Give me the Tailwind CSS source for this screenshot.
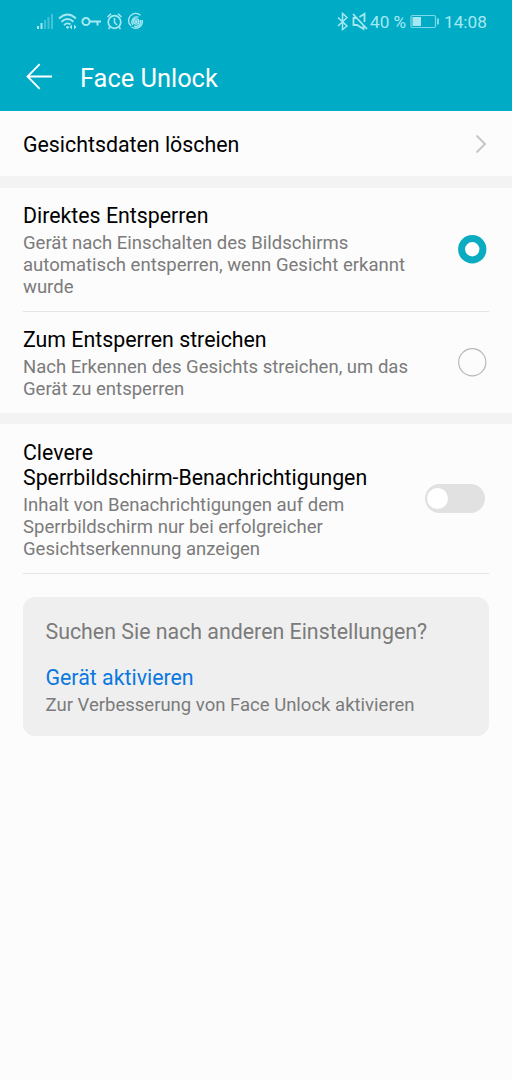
<!DOCTYPE html>
<html lang="de">
<head>
<meta charset="utf-8">
<meta name="viewport" content="width=device-width, initial-scale=1">
<title>Face Unlock</title>
<script src="https://cdn.jsdelivr.net/npm/@tailwindcss/browser@4"></script>
</head>
<body class="h-[1080px] w-[512px] overflow-hidden bg-[#fcfcfc] font-[Roboto,sans-serif] text-[18.53px] leading-[22px] text-[#7b7b7b]">
<header class="h-[111px] bg-[#00acc5] text-white">
  <div class="flex h-11 items-center justify-between pl-9 pr-[25px] text-[#a6e8f2]">
    <svg class="h-11 w-[112px]" viewBox="36 0 112 44" fill="none" stroke="currentColor" stroke-width="1.5">
      <g stroke="none" fill="currentColor"><rect x="37" y="26" width="2" height="3"/><rect x="40.500" y="23" width="2" height="6"/><g opacity=".4"><rect x="44" y="20" width="2" height="9"/><rect x="47.500" y="17" width="2" height="12"/><rect x="51" y="14" width="2" height="15"/></g></g>
      <path stroke-width="1.900" d="M59 18.500Q67.500 10.500 76 18.500M61.500 21.800Q67.500 16.300 73.500 21.800M64 25Q67.500 22 70.500 24.500"/>
      <circle cx="67.500" cy="27.300" r="1.400" fill="currentColor" stroke="none"/>
      <path d="M72 24.500L69.500 27L72 29.500ZM74 24.500L76.500 27L74 29.500Z" fill="currentColor" stroke="none"/>
      <circle cx="86" cy="21.500" r="3.600" stroke-width="2"/><path d="M89.600 21.500H101M97.500 21.500V25.500" stroke-width="2"/>
      <circle cx="114.500" cy="22" r="6.300" stroke-width="1.700"/><path d="M114.500 18V22.500L117 25M107.500 17L111 13.800M121.500 17L118 13.800M110 27L108.500 29M119 27L120.500 29"/>
      <g stroke-width="1.400"><path d="M140.500 15.200A7 7 0 1 0 131 26M131.500 27A7 7 0 0 0 142.300 20M133 25A5 5 0 0 1 138.500 17.200M140.400 20A5 5 0 0 1 134 26.200"/><circle cx="136.200" cy="21.500" r="2.600"/><circle cx="136.200" cy="21.500" r=".8"/></g>
    </svg>
    <div class="flex items-center text-[17.200px]">
      <svg class="h-11 w-8" viewBox="337 0 32 44" fill="none" stroke="currentColor" stroke-width="1.500">
        <path d="M338 17.500L347 26L342.500 29.500V13.500L347 17.500L338 26"/>
        <path stroke-width="1.800" d="M353 14L367 29M356.500 18H353.500V25H357L363.500 29V25.500M359.500 17L364.500 13.800V22"/>
      </svg>
      <span class="-mt-px ml-px w-[36px] whitespace-nowrap">40 %</span>
      <svg class="ml-[4px] h-11 w-[30px]" viewBox="410 0 30 44" fill="none" stroke="currentColor">
        <rect x="411" y="15.500" width="24.500" height="12" rx="1.500" stroke-width="1.200" opacity=".75"/><rect x="412.500" y="17" width="8.500" height="9" fill="currentColor" stroke="none"/><path d="M438 18.500V24.500" stroke-width="1.500"/>
      </svg>
      <span class="-mt-px ml-1 w-[43px] whitespace-nowrap">14:08</span>
    </div>
  </div>
  <div class="flex h-[67px] items-center pl-[26px]">
    <svg class="mb-[2px] h-[27px] w-[27px]" viewBox="0 0 27 27" fill="none" stroke="currentColor" stroke-width="1.800"><path d="M13.700 1.200L1.500 13.500L13.700 25.800M1.500 13.500H26"/></svg>
    <h1 class="ml-[27px] text-[25.400px] leading-[30px]">Face Unlock</h1>
  </div>
</header>
<main>
  <section class="flex h-[65px] items-center justify-between pl-[23px] pr-[25px]">
    <h2 class="mt-px text-[21.330px] leading-[25px] text-black">Gesichtsdaten löschen</h2>
    <svg class="h-5 w-3" viewBox="0 0 12 20" fill="none" stroke="#c3c3c3" stroke-width="1.800"><path d="M1.500 1.500L10 10L1.500 18.500"/></svg>
  </section>
  <div class="h-3 bg-[#f3f3f3]"></div>
  <section class="px-[23px]">
    <div class="flex h-[124px] items-center justify-between border-b border-[#e5e5e5] pr-[2.500px]">
      <div class="pt-[2px]"><h2 class="mb-1 text-[21.330px] leading-[25px] text-black">Direktes Entsperren</h2><p>Gerät nach Einschalten des Bildschirms<br>automatisch entsperren, wenn Gesicht erkannt<br>wurde</p></div>
      <svg class="size-[28.500px] shrink-0" viewBox="0 0 28.500 28.500"><circle cx="14.250" cy="14.250" r="10.700" fill="white" stroke="#0bacc2" stroke-width="7"/></svg>
    </div>
    <div class="flex h-[101px] items-center justify-between pr-[2.500px]">
      <div class="pt-px"><h2 class="mb-1 text-[21.330px] leading-[25px] text-black">Zum Entsperren streichen</h2><p>Nach Erkennen des Gesichts streichen, um das<br>Gerät zu entsperren</p></div>
      <svg class="size-[28.500px] shrink-0" viewBox="0 0 28.500 28.500"><circle cx="14.250" cy="14.250" r="13.600" fill="none" stroke="#b8b8b8" stroke-width="1.200"/></svg>
    </div>
  </section>
  <div class="h-[11px] bg-[#f3f3f3]"></div>
  <section class="px-[23px]">
    <div class="flex h-[150px] items-center justify-between border-b border-[#e5e5e5] pr-1">
      <div class="pt-[3px]"><h2 class="mb-1 text-[21.300px] leading-[25px] text-black">Clevere<br>Sperrbildschirm-Benachrichtigungen</h2><p>Inhalt von Benachrichtigungen auf dem<br>Sperrbildschirm nur bei erfolgreicher<br>Gesichtserkennung anzeigen</p></div>
      <div class="flex h-[29px] w-[60px] shrink-0 items-center rounded-full bg-[#e1e1e1] pl-[2px]"><div class="size-[21px] rounded-full bg-white"></div></div>
    </div>
    <aside class="mt-[23px] h-[139px] rounded-xl bg-[#efefef] px-[22.500px] pt-[22px]">
      <p class="text-[21.350px] leading-[25px]">Suchen Sie nach anderen Einstellungen?</p>
      <a class="mt-[21px] block text-[21.350px] leading-[25px] text-[#0b78df]">Gerät aktivieren</a>
      <p class="mt-1">Zur Verbesserung von Face Unlock aktivieren</p>
    </aside>
  </section>
</main>
</body>
</html>
